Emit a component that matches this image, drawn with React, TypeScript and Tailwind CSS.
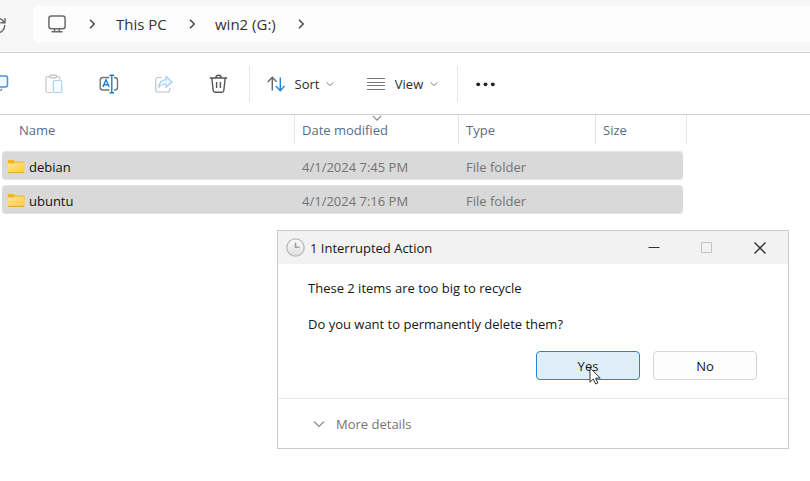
import type { ReactNode } from "react";

const files = [
  { name: "debian", modified: "4/1/2024 7:45 PM", type: "File folder" },
  { name: "ubuntu", modified: "4/1/2024 7:16 PM", type: "File folder" },
];

function Crumb() {
  return (
    <svg className="h-3 w-3 shrink-0" viewBox="0 0 12 12" fill="none" stroke="#484848" strokeWidth="1.5" aria-hidden="true">
      <path d="M4 1.8 8.2 6 4 10.2" />
    </svg>
  );
}

function Chevron({ className }: { className: string }) {
  return (
    <svg className={className} viewBox="0 0 12 12" fill="none" stroke="currentColor" strokeWidth="1.5" aria-hidden="true">
      <path d="M1 3.5 6 8.5 11 3.5" />
    </svg>
  );
}

function Tool({ label, children }: { label: string; children: ReactNode }) {
  return (
    <button type="button" aria-label={label} className="flex h-9 w-[55px] shrink-0 items-center justify-center">
      <svg className="h-5 w-5" viewBox="0 0 20 20" fill="none" strokeWidth="1.2" aria-hidden="true">
        {children}
      </svg>
    </button>
  );
}

function Folder() {
  return (
    <svg className="h-4 w-[18px] shrink-0" viewBox="0 0 18 16" aria-hidden="true">
      <defs>
        <linearGradient id="folder" x1="0" y1="0" x2="1" y2="1">
          <stop offset="0" stopColor="#ffe394" />
          <stop offset="1" stopColor="#ffcb3d" />
        </linearGradient>
      </defs>
      <path d="M.8 2q0-1 1-1h4.700l1.300 1.500h8.700q1 0 1 1V8H.8z" fill="#f2b51d" />
      <path d="M.8 4.500h5.700l1.300-1h9.700v9q0 1-1 1H1.800q-1 0-1-1z" fill="url(#folder)" />
      <path d="M1 13.500h16.300" stroke="#dfa32b" strokeWidth=".9" />
    </svg>
  );
}

function AddressBar() {
  return (
    <div className="flex h-[53px] items-start border-b border-[#d2d2d2] bg-[#f7f7f7] pt-1.5">
      <button type="button" aria-label="Refresh" className="-ml-3 mr-[27px] mt-2 shrink-0">
        <svg className="h-[22px] w-[18px]" viewBox="0 0 18 22" fill="none" stroke="#666" strokeWidth="1.4">
          <path d="M16.700 11A7.200 7.200 0 1 1 14.500 6.300L16.500 8.500M17 4v4.700h-4.700" />
        </svg>
      </button>
      <nav aria-label="Address" className="flex h-9 flex-1 items-center rounded-l-md bg-[#fdfdfd] pl-[15px] text-[15px] leading-6 text-[#333]">
        <svg className="h-[18px] w-[18px] shrink-0" viewBox="0 0 18 18" fill="none" stroke="#6b6b6b" strokeWidth="1.5" aria-hidden="true">
          <rect x=".9" y=".9" width="16.200" height="12.800" rx="2.500" />
          <path d="M6.500 13.500v3M11.300 13.500v3M3.500 16.800h11" />
        </svg>
        <span className="ml-5"><Crumb /></span>
        <a href="#this-pc" className="ml-[18px] w-[52px] whitespace-nowrap">This PC</a>
        <span className="ml-[18px]"><Crumb /></span>
        <a href="#win2" className="ml-[17px] w-[62px] whitespace-nowrap">win2 (G:)</a>
        <span className="ml-[18px]"><Crumb /></span>
      </nav>
    </div>
  );
}

function Toolbar() {
  return (
    <div className="flex h-[62px] items-center border-b border-[#d2d2d2] bg-white text-[#2b2b2b]">
      <div className="-ml-[29px] flex">
        <Tool label="Copy">
          <rect x="3" y="2" width="15.500" height="11" rx="2" fill="#f2f9ff" stroke="#3b98e4" strokeWidth="1.500" />
          <path d="M6 16.500h5.500l1.500-1.500" stroke="#777" />
        </Tool>
        <Tool label="Paste">
          <path d="M8.500 18.500H3.500Q2 18.500 2 17V4q0-1.500 1.500-1.500h2.200M12.500 2.500h1.800q1.400 0 1.400 1.500v1.700" stroke="#c6c6c6" />
          <rect x="5.800" y="1.200" width="6.800" height="2.600" rx="1.300" stroke="#bcbcbc" />
          <rect x="9.300" y="6.500" width="8.500" height="12" rx="1.500" fill="#fafdff" stroke="#a8d1f5" />
        </Tool>
        <Tool label="Rename">
          <path d="M10.500 3.500H4Q1.200 3.500 1.200 6v7.500Q1.200 16 4 16h6.500M15 3.500h.500q3 0 3 2.500v7.500q0 2.500-3 2.500H15" stroke="#777" strokeWidth="1.400" />
          <path d="M3.800 13 7 5.700l3.200 7.300M4.900 10.700h4.200M12.800 1.700v16.600M10.500 1.300h4.600M10.500 18.700h4.600" stroke="#1680d8" strokeWidth="1.400" />
        </Tool>
        <Tool label="Share">
          <path d="M8 3.500H4Q1.700 3.500 1.700 6v9.500Q1.700 18 4 18h9.500q2.300 0 2.300-2.500V14" stroke="#c4c4c4" />
          <path d="M12 2.300v3.400C7.500 6 5 9 4.700 13.500c2-2.600 4.300-3.600 7.300-3.500v3.500L18 8z" fill="#edf6ff" stroke="#a5cff4" strokeLinejoin="round" />
        </Tool>
        <Tool label="Delete">
          <path d="M.800 4h17.400M6.800 4q0-2.700 2.700-2.700T12.200 4M2.800 4l1.400 12.500q.2 1.800 2 1.800h6.600q1.800 0 2-1.800L16.200 4M7.600 8v6M11.400 8v6" stroke="#555" strokeWidth="1.400" />
        </Tool>
      </div>
      <div className="ml-[3px] h-9 w-px bg-[#e8e8e8]" />
      <button type="button" className="ml-[17px] flex items-center">
        <svg className="h-[18px] w-[18px]" viewBox="0 0 18 18" fill="none" strokeWidth="1.400" aria-hidden="true">
          <path d="M5.300 15.500V2.500M.700 7 5.300 2.300l4.300 4.500" stroke="#666" />
          <path d="M13.300 2.500v13M8.900 11l4.400 4.700L17.600 11" stroke="#2184dc" />
        </svg>
        <span className="ml-[9px] w-[26px]">Sort</span>
        <Chevron className="ml-1.5 h-2 w-2 text-[#777]" />
      </button>
      <button type="button" className="ml-[33px] flex items-center">
        <svg className="h-[18px] w-[18px]" viewBox="0 0 18 18" stroke="#777" strokeWidth="1.200" aria-hidden="true">
          <path d="M0 3.500h18M0 7.500h18M0 10.500h18M0 14.500h18" />
        </svg>
        <span className="ml-[9px] w-[30px]">View</span>
        <Chevron className="ml-1.5 h-2 w-2 text-[#777]" />
      </button>
      <div className="ml-[19px] h-9 w-px bg-[#e8e8e8]" />
      <button type="button" aria-label="See more" className="ml-[18px]">
        <svg className="h-5 w-5" viewBox="0 0 20 20" fill="#222" aria-hidden="true">
          <circle cx="2.200" cy="10.300" r="1.900" />
          <circle cx="9.500" cy="10.300" r="1.900" />
          <circle cx="16.800" cy="10.300" r="1.900" />
        </svg>
      </button>
    </div>
  );
}

function HeaderCell({ children, sorted }: { children: ReactNode; sorted?: boolean }) {
  return (
    <th scope="col" className="p-0 pb-0.5 text-left font-normal">
      <div className="relative flex h-[29px] items-center border-r border-[#e5e5e5] pl-[7px] pt-px">
        {sorted && <Chevron className="absolute left-1/2 top-[-2px] h-2.5 w-2.5 -translate-x-1/2 text-[#888]" />}
        {children}
      </div>
    </th>
  );
}

function FileList() {
  return (
    <table className="ml-0.5 w-[685px] table-fixed border-separate border-spacing-0">
      <colgroup>
        <col className="w-[293px]" />
        <col className="w-[164px]" />
        <col className="w-[137px]" />
        <col className="w-[91px]" />
      </colgroup>
      <thead className="text-[#586d85]">
        <tr>
          <HeaderCell><span className="pl-2.5">Name</span></HeaderCell>
          <HeaderCell sorted>Date modified</HeaderCell>
          <HeaderCell>Type</HeaderCell>
          <HeaderCell>Size</HeaderCell>
        </tr>
      </thead>
      <tbody className="text-[#747474]">
        {files.map((file) => (
          <tr key={file.name}>
            <td className="p-0 pt-[5px]">
              <div className="flex h-[29px] items-center gap-1 rounded-l-sm border-y border-[#e2e2e2] bg-[#d9d9d9] pl-[5px] pt-0.5 text-[#111]">
                <Folder />
                {file.name}
              </div>
            </td>
            <td className="p-0 pt-[5px]">
              <div className="flex h-[29px] items-center border-y border-[#e2e2e2] bg-[#d9d9d9] pl-[7px] pt-0.5">{file.modified}</div>
            </td>
            <td className="p-0 pt-[5px]">
              <div className="flex h-[29px] items-center border-y border-[#e2e2e2] bg-[#d9d9d9] pl-[7px] pt-0.5">{file.type}</div>
            </td>
            <td className="p-0 pt-[5px]">
              <div className="mr-1 h-[29px] rounded-r-sm border-y border-[#e2e2e2] bg-[#d9d9d9]" />
            </td>
          </tr>
        ))}
      </tbody>
    </table>
  );
}

function DeleteDialog() {
  return (
    <section
      role="dialog"
      aria-labelledby="dialog-title"
      className="absolute left-[277px] top-[230px] w-[512px] border border-[#cbcbcb] bg-white text-[#161616]"
    >
      <header className="flex h-[33px] items-center bg-[#f2f2f2] pl-2">
        <svg className="h-[19px] w-[19px]" viewBox="0 0 19 19" fill="none" aria-hidden="true">
          <defs>
            <linearGradient id="clock" x1="0" y1="0" x2="0" y2="1">
              <stop offset="0" stopColor="#fdfdfd" />
              <stop offset="1" stopColor="#dedede" />
            </linearGradient>
          </defs>
          <circle cx="9.500" cy="9.500" r="8.700" fill="url(#clock)" stroke="#b5b5b5" strokeWidth="1.200" />
          <path d="M9.500 4.500v4.800h4" stroke="#a0a0a0" strokeWidth="1.500" />
        </svg>
        <h1 id="dialog-title" className="ml-[5px] flex-1">1 Interrupted Action</h1>
        <button type="button" aria-label="Minimize" className="flex h-full w-[53px] items-center justify-center">
          <svg className="h-3 w-3" viewBox="0 0 12 12" stroke="#333"><path d="M.5 5.500h11" /></svg>
        </button>
        <button type="button" aria-label="Maximize" disabled className="flex h-full w-[53px] items-center justify-center">
          <svg className="h-3 w-3" viewBox="0 0 12 12" fill="none" stroke="#c2c2c2"><rect x=".5" y=".5" width="10" height="10" rx=".5" /></svg>
        </button>
        <button type="button" aria-label="Close" className="mr-px flex h-full w-[54px] items-center justify-center">
          <svg className="h-3 w-3" viewBox="0 0 12 12" stroke="#2b2b2b" strokeWidth="1.300"><path d="m.5.5 11 11m0-11-11 11" /></svg>
        </button>
      </header>
      <div className="px-[30px] pb-[18px] pt-3.5">
        <p>These 2 items are too big to recycle</p>
        <p className="mt-4">Do you want to permanently delete them?</p>
        <div className="mr-px mt-[17px] flex justify-end gap-[13px]">
          <button type="button" className="relative h-[29px] w-[104px] rounded border border-[#2586d3] bg-[#e0eef9]">
            Yes
            <svg className="absolute left-[52px] top-[15px] h-[18px] w-3" viewBox="0 0 12 18" aria-hidden="true">
              <path d="M1 .800v14.400l3.300-3.200 2.300 5 2.200-1-2.200-4.900h4.600z" fill="#fff" stroke="#333" />
            </svg>
          </button>
          <button type="button" className="h-[29px] w-[104px] rounded border border-[#d5d5d5] bg-[#fdfdfd]">No</button>
        </div>
      </div>
      <footer className="border-t border-[#e6e6e6] pb-3.5 pl-[35px] pt-[15px]">
        <button type="button" className="flex items-center gap-[11px] text-[#747474]">
          <Chevron className="h-3 w-3 text-[#999]" />
          More details
        </button>
      </footer>
    </section>
  );
}

export default function App() {
  return (
    <main className="relative min-h-screen overflow-hidden bg-white font-['Open_Sans','Noto_Sans',sans-serif] text-[13px] leading-5">
      <AddressBar />
      <Toolbar />
      <FileList />
      <DeleteDialog />
    </main>
  );
}
